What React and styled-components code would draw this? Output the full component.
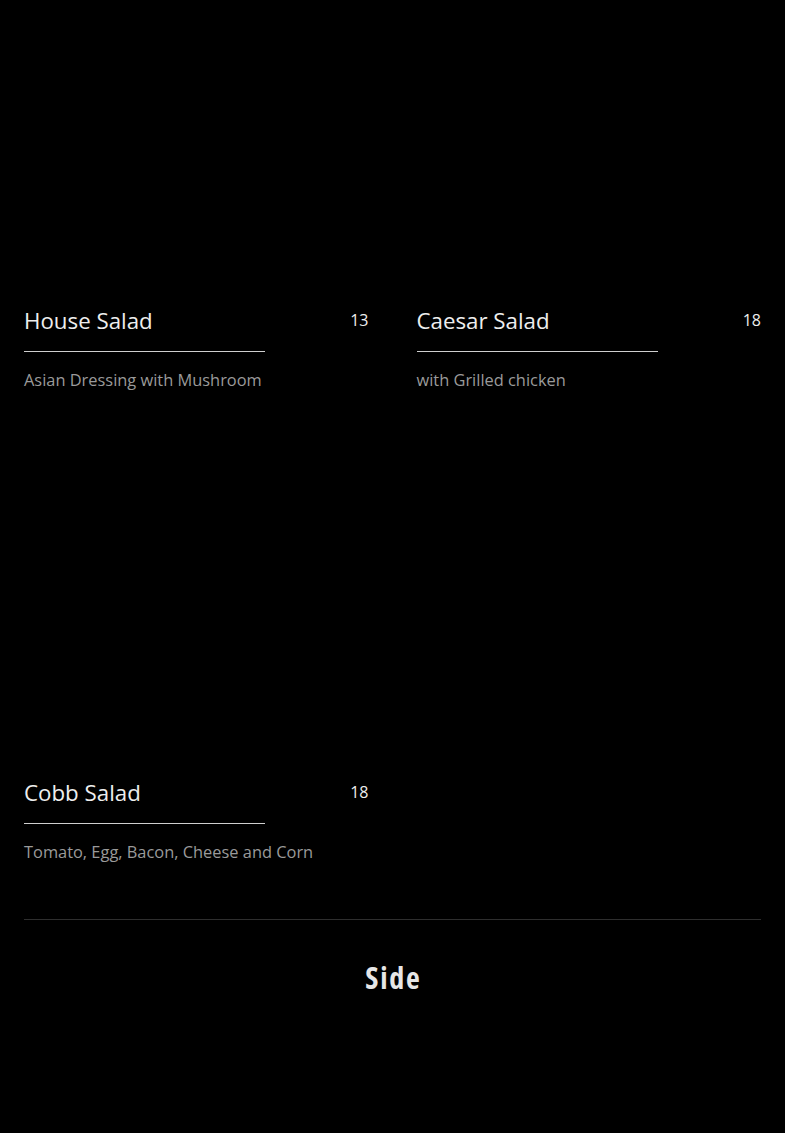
import React from 'react'
import styled, { createGlobalStyle } from 'styled-components'

const GlobalStyle = createGlobalStyle`
    html, body {
        margin: 0;
        padding: 0;
        background: #000;
    }
    body {
        font-family: 'Open Sans', 'Noto Sans', sans-serif;
        color: #eee;
    }
`

let salads = [
    { name: 'House Salad', price: 13, desc: 'Asian Dressing with Mushroom' },
    { name: 'Caesar Salad', price: 18, desc: 'with Grilled chicken' },
    { name: 'Cobb Salad', price: 18, desc: 'Tomato, Egg, Bacon, Cheese and Corn' },
]

export default function App() {
    return (
        <>
            <GlobalStyle />
            <Page>
                <Grid>
                    {salads.map((item) => (
                        <Item key={item.name}>
                            <Photo />
                            <Header>
                                <Title>{item.name}</Title>
                                <Price>{item.price}</Price>
                            </Header>
                            <Rule />
                            <Desc>{item.desc}</Desc>
                        </Item>
                    ))}
                </Grid>
                <Divider />
                <SectionTitle>Side</SectionTitle>
            </Page>
        </>
    )
}

let Page = styled.div`
    padding: 0 24px;
    min-height: 1133px;
    background: #000;
`
let Grid = styled.div`
    display: grid;
    grid-template-columns: 1fr 1fr;
    column-gap: 48px;
    row-gap: 80px;
`
let Item = styled.div`
    display: flex;
    flex-direction: column;
`
let Photo = styled.div`
    height: 280px;
    margin-bottom: 24px;
    background: #000;
`
let Header = styled.div`
    display: flex;
    justify-content: space-between;
    align-items: center;
    height: 33px;
`
let Title = styled.h3`
    margin: 0;
    font-size: 22.3px;
    font-weight: 400;
    line-height: 33px;
    color: #eeeeee;
`
let Price = styled.span`
    font-size: 16px;
    font-weight: 400;
    line-height: 33px;
    color: #eeeeee;
`
let Rule = styled.div`
    width: 70%;
    height: 1px;
    margin-top: 14px;
    background: #cfcfcf;
`
let Desc = styled.p`
    margin: 16px 0 0;
    font-size: 16.4px;
    font-weight: 400;
    line-height: 24px;
    color: #9a9a9a;
`
let Divider = styled.hr`
    margin: 55px 0 0;
    border: none;
    height: 1px;
    background: #2e2e2e;
`
let SectionTitle = styled.h2`
    margin: 38px 0 0;
    text-align: center;
    font-family: 'Open Sans', sans-serif;
    font-stretch: 75%;
    font-size: 30px;
    font-weight: 700;
    letter-spacing: 1.8px;
    text-indent: 1.8px;
    line-height: 40px;
    color: #e6e6e6;
`
